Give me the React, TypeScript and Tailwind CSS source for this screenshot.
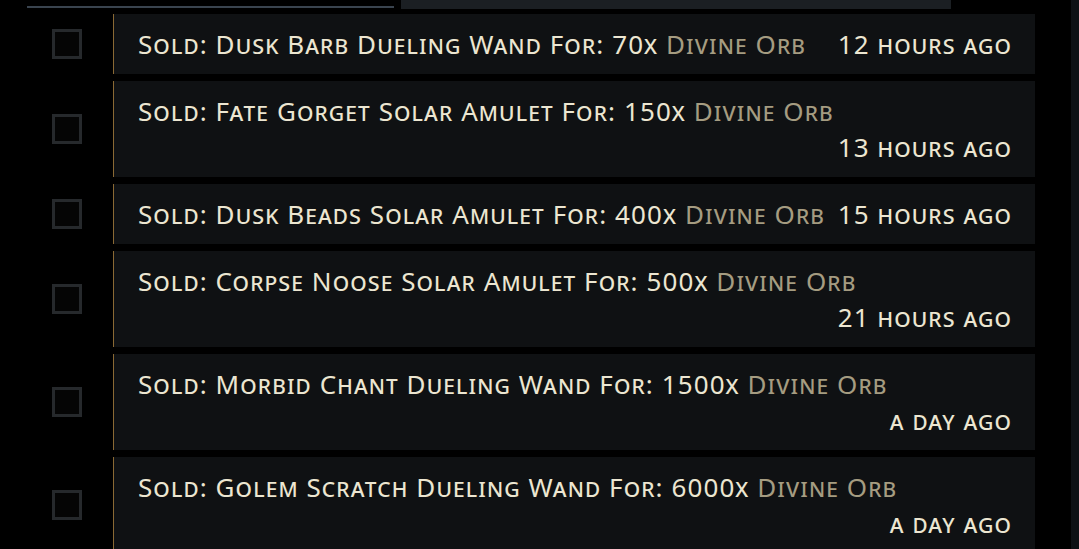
type Sale = {
  item: string
  price: string
  time: string
  inline: boolean
}

const sales: Sale[] = [
  { item: 'Dusk Barb Dueling Wand', price: '70x', time: '12 hours ago', inline: true },
  { item: 'Fate Gorget Solar Amulet', price: '150x', time: '13 hours ago', inline: false },
  { item: 'Dusk Beads Solar Amulet', price: '400x', time: '15 hours ago', inline: true },
  { item: 'Corpse Noose Solar Amulet', price: '500x', time: '21 hours ago', inline: false },
  { item: 'Morbid Chant Dueling Wand', price: '1500x', time: 'a day ago', inline: false },
  { item: 'Golem Scratch Dueling Wand', price: '6000x', time: 'a day ago', inline: false },
]

function SaleText({ sale }: { sale: Sale }) {
  return (
    <span className="whitespace-nowrap">
      Sold: {sale.item} For: {sale.price}{' '}
      <span className="text-[#a59c81]">Divine Orb</span>
    </span>
  )
}

function SaleRow({ sale }: { sale: Sale }) {
  return (
    <div className="flex items-center">
      <div className="w-[113px] shrink-0 pl-[52px]">
        <div className="w-[30px] h-[30px] border-[3px] border-[#26292c] bg-[#050505]" />
      </div>
      <div className="w-[922px] border-l border-[#8a6934] bg-[#0f1113] pl-[24px] pr-[24px] py-[12px]">
        {sale.inline ? (
          <div className="flex justify-between gap-[6px]">
            <SaleText sale={sale} />
            <span className="whitespace-nowrap mr-[-1px]">{sale.time}</span>
          </div>
        ) : (
          <>
            <div>
              <SaleText sale={sale} />
            </div>
            <div className="text-right mr-[-1px]">{sale.time}</div>
          </>
        )}
      </div>
    </div>
  )
}

export default function App() {
  return (
    <div
      className="h-screen overflow-hidden bg-black flex text-[#ece6d1] text-[26px] leading-[36px] tracking-[1.1px] [font-variant:small-caps]"
      style={{ fontFamily: '"Noto Sans", sans-serif' }}
    >
      <div className="flex-1">
        {/* tab strip */}
        <div className="flex items-end h-[9px]">
          <div className="ml-[27px] w-[367px] h-[2px] mb-[1px] bg-[#3a444f]" />
          <div className="ml-[7px] w-[550px] h-full bg-[#1b1f23]" />
        </div>

        <div className="mt-[5px] flex flex-col gap-[7px]">
          {sales.map((s) => (
            <SaleRow key={s.item} sale={s} />
          ))}
        </div>
      </div>
      <div className="w-[8px] bg-[#0d1014]" />
    </div>
  )
}
